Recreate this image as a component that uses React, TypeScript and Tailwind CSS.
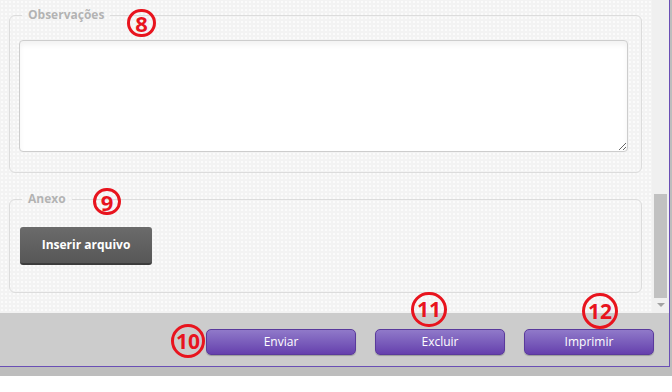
import React from 'react'

const font = { fontFamily: '"Open Sans", "Liberation Sans", Arial, sans-serif' }

/** anotação: círculo vermelho numerado */
function Marker({ n, className }: { n: string; className: string }) {
  return (
    <div
      className={`absolute flex items-center justify-center rounded-full border-[3px] border-[#e8141e] font-bold text-[#e8141e] leading-none ${className}`}
    >
      {n}
    </div>
  )
}

function PurpleButton({ label, w }: { label: string; w: string }) {
  return (
    <button
      className={`${w} h-[26px] rounded-[5px] border border-[#5a3a9c] bg-gradient-to-b from-[#9079c9] to-[#6640ad] text-[12px] text-white shadow-[0_1px_1px_rgba(0,0,0,0.25)]`}
    >
      {label}
    </button>
  )
}

export default function App() {
  return (
    <div className="w-[672px] h-[392px] bg-white overflow-hidden" style={font}>
      <div className="h-[376px] bg-[#bdbdbd]">
        <div className="w-[670px] h-[367px] flex flex-col border-r border-b border-[#6a4fb5]">
          {/* conteúdo com rolagem */}
          <div className="flex h-[313px]">
            <div className="w-[652px] pt-[7px] bg-[#f3f3f3] bg-[radial-gradient(#fbfbfb_1px,transparent_1px)] bg-[length:4px_4px]">
              {/* Observações */}
              <fieldset className="relative ml-[9px] w-[633px] rounded-[6px] border border-[#dcdcdc] px-[9px] pt-[17px] pb-[20px]">
                <legend className="ml-[3px] px-[6px] text-[12px] leading-[16px] font-bold text-[#b3b3b3]">
                  Observações
                </legend>
                <Marker n="8" className="left-[117px] top-[-14px] w-[29px] h-[28px] text-[22px]" />
                <textarea className="block w-[609px] h-[112px] rounded-[4px] border border-[#cdcdcd] bg-white shadow-[inset_0_4px_5px_rgba(0,0,0,0.05)] outline-none" />
              </fieldset>

              {/* Anexo */}
              <fieldset className="relative mt-[18px] ml-[9px] w-[633px] rounded-[6px] border border-[#dcdcdc] px-[10px] pt-[20px] pb-[27px]">
                <legend className="ml-[2px] px-[6px] text-[12px] leading-[16px] font-bold text-[#b3b3b3]">
                  Anexo
                </legend>
                <Marker n="9" className="left-[83px] top-[-19px] w-[28px] h-[27px] text-[22px]" />
                <button className="w-[132px] h-[38px] rounded-[3px] border-b-[2px] border-[#3c3c3c] bg-gradient-to-b from-[#6b6b6b] to-[#575757] text-[12px] font-bold text-white">
                  Inserir arquivo
                </button>
              </fieldset>
            </div>

            {/* barra de rolagem */}
            <div className="w-[17px] bg-[#f0f0f0] flex flex-col pt-[194px]">
              <div className="ml-[2px] w-[13px] h-[104px] bg-[#c1c1c1]" />
              <div className="flex justify-center pt-[5px]">
                <div className="w-0 h-0 border-l-[4px] border-r-[4px] border-t-[4px] border-l-transparent border-r-transparent border-t-[#a3a3a3]" />
              </div>
            </div>
          </div>

          {/* rodapé */}
          <div className="relative flex-1 bg-[#cccccc] flex gap-[19px] pl-[206px] pt-[16px]">
            <PurpleButton label="Enviar" w="w-[150px]" />
            <PurpleButton label="Excluir" w="w-[130px]" />
            <PurpleButton label="Imprimir" w="w-[130px]" />
            <Marker n="10" className="left-[171px] top-[11px] w-[34px] h-[34px] text-[21px]" />
            <Marker n="11" className="left-[411px] top-[-21px] w-[36px] h-[35px] text-[21px]" />
            <Marker n="12" className="left-[582px] top-[-20px] w-[36px] h-[36px] text-[21px]" />
          </div>
        </div>
      </div>
    </div>
  )
}
